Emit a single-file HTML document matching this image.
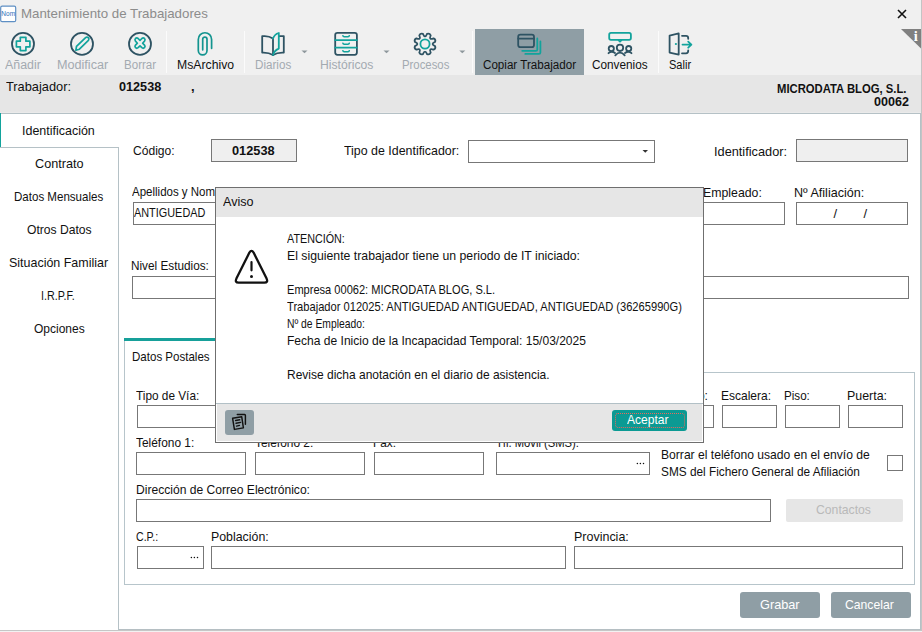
<!DOCTYPE html>
<html><head><meta charset="utf-8">
<style>
html,body{margin:0;padding:0;width:922px;height:632px;overflow:hidden;background:#f0f0f0}
body{position:relative;font-family:"Liberation Sans", sans-serif}
.r,.bx,.tx{position:absolute;box-sizing:border-box}
.tx{white-space:pre;transform-origin:0 0;}
</style></head><body>
<div class='r' style='left:0px;top:0px;width:922px;height:632px;background:#f0f0f0;'></div>
<div class='r' style='left:0px;top:75px;width:921px;height:38px;background:#e6e6e6;'></div>
<div class='r' style='left:0px;top:112px;width:921px;height:1px;background:#eaeaea;'></div>
<div class='r' style='left:0px;top:113px;width:921px;height:1px;background:#b5c1c6;'></div>
<div class='r' style='left:0px;top:114px;width:920px;height:516px;background:#ffffff;'></div>
<div class='r' style='left:921px;top:0px;width:1px;height:632px;background:#c4c4c4;'></div>
<div class='r' style='left:920px;top:113px;width:1px;height:517px;background:#b5c1c6;'></div>
<div class='r' style='left:118px;top:629px;width:803px;height:1px;background:#b5bfc3;'></div>
<div class='r' style='left:0px;top:630px;width:922px;height:1px;background:#c6c6c6;'></div>
<div class='r' style='left:0px;top:631px;width:922px;height:1px;background:#f2f2f2;'></div>
<div class='r' style='left:0px;top:113px;width:1px;height:34px;background:#12a39c;'></div>
<div class='r' style='left:0px;top:147px;width:119px;height:1px;background:#b5c1c6;'></div>
<div class='r' style='left:118px;top:147px;width:1px;height:483px;background:#b5c1c6;'></div>
<div class='r' style='left:166px;top:31px;width:1px;height:42px;background:#fbfbfb;'></div>
<div class='r' style='left:244px;top:31px;width:1px;height:42px;background:#fbfbfb;'></div>
<div class='r' style='left:472px;top:31px;width:1px;height:42px;background:#fbfbfb;'></div>
<div class='r' style='left:658px;top:31px;width:1px;height:42px;background:#fbfbfb;'></div>
<div class='r' style='left:475px;top:29px;width:109px;height:46px;background:#8f9ea5;'></div>
<div class='bx' style='left:211px;top:139px;width:86px;height:23px;background:#efefef;border:1px solid #777777;'></div>
<div class='bx' style='left:468px;top:140px;width:187px;height:23px;background:#fff;border:1px solid #777777;'></div>
<div class='bx' style='left:796px;top:139px;width:112px;height:23px;background:#efefef;border:1px solid #777777;'></div>
<div class='bx' style='left:133px;top:202px;width:468px;height:23px;background:#fff;border:1px solid #777777;'></div>
<div class='bx' style='left:620px;top:202px;width:165px;height:23px;background:#fff;border:1px solid #777777;'></div>
<div class='bx' style='left:796px;top:202px;width:112px;height:23px;background:#fff;border:1px solid #777777;'></div>
<div class='bx' style='left:132px;top:276px;width:777px;height:23px;background:#fff;border:1px solid #777777;'></div>
<svg class='r' style='left:640px;top:148px' width='10' height='6'><path d='M2.5,2 L8,2 L5.25,4.8Z' fill='#333'/></svg>
<div class='r' style='left:124px;top:338px;width:92px;height:3px;background:#17a09a;'></div>
<div class='r' style='left:124px;top:341px;width:1px;height:244px;background:#b7c5cb;'></div>
<div class='r' style='left:124px;top:584px;width:791px;height:1px;background:#b7c5cb;'></div>
<div class='r' style='left:914px;top:372px;width:1px;height:213px;background:#b7c5cb;'></div>
<div class='r' style='left:216px;top:372px;width:699px;height:1px;background:#b7c5cb;'></div>
<div class='bx' style='left:137px;top:405px;width:504px;height:23px;background:#fff;border:1px solid #777777;'></div>
<div class='bx' style='left:650px;top:405px;width:64px;height:23px;background:#fff;border:1px solid #777777;'></div>
<div class='bx' style='left:722px;top:405px;width:55px;height:23px;background:#fff;border:1px solid #777777;'></div>
<div class='bx' style='left:785px;top:405px;width:55px;height:23px;background:#fff;border:1px solid #777777;'></div>
<div class='bx' style='left:848px;top:405px;width:55px;height:23px;background:#fff;border:1px solid #777777;'></div>
<div class='bx' style='left:136px;top:452px;width:110px;height:23px;background:#fff;border:1px solid #777777;'></div>
<div class='bx' style='left:255px;top:452px;width:110px;height:23px;background:#fff;border:1px solid #777777;'></div>
<div class='bx' style='left:374px;top:452px;width:110px;height:23px;background:#fff;border:1px solid #777777;'></div>
<div class='bx' style='left:496px;top:452px;width:154px;height:23px;background:#fff;border:1px solid #777777;'></div>
<div class='bx' style='left:887px;top:455px;width:16px;height:16px;background:#fff;border:1px solid #777777;'></div>
<div class='bx' style='left:136px;top:499px;width:635px;height:23px;background:#fff;border:1px solid #777777;'></div>
<div class='r' style='left:786px;top:499px;width:117px;height:23px;background:#e6e6e6;border-radius:2px'></div>
<div class='bx' style='left:137px;top:546px;width:67px;height:23px;background:#fff;border:1px solid #777777;'></div>
<div class='bx' style='left:211px;top:546px;width:355px;height:23px;background:#fff;border:1px solid #777777;'></div>
<div class='bx' style='left:574px;top:546px;width:329px;height:23px;background:#fff;border:1px solid #777777;'></div>
<svg class='r' style='left:0;top:0' width='922' height='632'><g fill='#111'><circle cx='637.4' cy='463.4' r='0.75'/><circle cx='640.4' cy='463.4' r='0.75'/><circle cx='643.5' cy='463.4' r='0.75'/><circle cx='191.4' cy='557.4' r='0.75'/><circle cx='194.4' cy='557.4' r='0.75'/><circle cx='197.5' cy='557.4' r='0.75'/></g></svg>
<div class='r' style='left:740px;top:592px;width:80px;height:26px;background:#8f9ea5;border-radius:3px'></div>
<div class='r' style='left:831px;top:592px;width:80px;height:26px;background:#8f9ea5;border-radius:3px'></div>
<svg class='r' style='left:0;top:5px' width='18' height='18'>
<rect x='0.7' y='1.2' width='15' height='15.5' rx='1.5' fill='#fff' stroke='#5e8fc4' stroke-width='1.2'/>
<text x='8.2' y='11.2' font-family='Liberation Sans' font-size='6.5' fill='#2f6fb8' text-anchor='middle' transform='scale(1,1)'>Nom</text></svg>
<svg class='r' style='left:894px;top:6px' width='16' height='16'><path d='M4,4 L12,12 M12,4 L4,12' stroke='#111' stroke-width='1.6'/></svg>
<svg class='r' style='left:900px;top:28px' width='22' height='22'><path d='M1,1 L21,1 L21,20.5Z' fill='#808080'/><text x='15.8' y='13.2' font-family='Liberation Serif' font-weight='bold' font-size='14.5' fill='#fff' text-anchor='middle'>i</text></svg>
<svg class='r' style='left:0;top:0' width='922' height='80' fill='none' stroke-linecap='round' stroke-linejoin='round'>
<g stroke='#2e5363' stroke-width='1.8'>
<circle cx='23' cy='43.9' r='11'/>
<circle cx='82' cy='43.9' r='11'/>
<circle cx='140' cy='43.9' r='11'/>
</g>
<g stroke='#12a39c' stroke-width='1.7'>
<path d='M20.3,37.3 H25.9 V41.2 H29.9 V46.8 H25.9 V50.6 H20.3 V46.8 H16.4 V41.2 H20.3 Z'/>
<path d='M76.5,46.4 L85.6,37.6 Q87,36.4 88.3,37.7 Q89.5,39 88.4,40.4 L79.4,49.2 L75.9,50.2 Z'/>
<path d='M135.5,38.5 Q136.8,37.4 138.1,38.5 L140,40.4 L141.9,38.5 Q143.2,37.4 144.5,38.5 Q145.6,39.8 144.5,41.1 L142.6,43.2 L144.5,45.1 Q145.6,46.4 144.5,47.7 Q143.2,48.8 141.9,47.7 L140,45.9 L138.1,47.7 Q136.8,48.8 135.5,47.7 Q134.4,46.4 135.5,45.1 L137.4,43.2 L135.5,41.1 Q134.4,39.8 135.5,38.5Z'/>
<path d='M211.6,48.3 V39.4 A6.65,6.65 0 0 0 198.3,39.4 V50.6 A4.35,4.35 0 0 0 207,50.6 V39.2 A2.15,2.15 0 0 0 202.7,39.2 V49.8' stroke='#13948f'/>
</g>
<g stroke='#2e5363' stroke-width='1.8'>
<path d='M273,38.5 C270.5,36.8 266,35.7 262.2,36.2 V52.6 C266,52.4 270.5,53.4 273,55 Z'/>
<path d='M279.5,36.2 C281,36 282.8,36 283.8,36.2 V52.6 C280,52.4 275.5,53.4 273,55'/>
<rect x='335.2' y='32.9' width='21.7' height='21.9' rx='2.2'/>
<path d='M425.00,36.40 Q425.99,36.47 427.05,33.91 Q429.59,32.91 430.68,35.41 Q429.63,37.97 430.37,38.63 Q431.03,39.37 433.59,38.32 Q436.09,39.41 435.09,41.95 Q432.53,43.01 432.60,44.00 Q432.53,44.99 435.09,46.05 Q436.09,48.59 433.59,49.68 Q431.03,48.63 430.37,49.37 Q429.63,50.03 430.68,52.59 Q429.59,55.09 427.05,54.09 Q425.99,51.53 425.00,51.60 Q424.01,51.53 422.95,54.09 Q420.41,55.09 419.32,52.59 Q420.37,50.03 419.63,49.37 Q418.97,48.63 416.41,49.68 Q413.91,48.59 414.91,46.05 Q417.47,44.99 417.40,44.00 Q417.47,43.01 414.91,41.95 Q413.91,39.41 416.41,38.32 Q418.97,39.37 419.63,38.63 Q420.37,37.97 419.32,35.41 Q420.41,32.91 422.95,33.91 Q424.01,36.47 425.00,36.40Z'/>
<rect x='518.2' y='34.6' width='15.8' height='12.6' rx='2.2'/>
<path d='M518.2,38.7 H534'/>
<circle cx='611.3' cy='48.6' r='2.6'/>
<circle cx='620' cy='47.8' r='3.2'/>
<circle cx='628.7' cy='48.6' r='2.6'/>
<path d='M608.5,53.2 Q611.5,50.4 615,53 M615.3,55.3 Q620,49.8 624.7,55.3 M625,53 Q628.5,50.4 631.5,53.2'/>
<path d='M669.6,35.7 L678.7,33.4 V54.6 L669.6,52.6 Z'/>
<path d='M682,35.8 H686 Q688.2,35.8 688.2,38 V38.8 M682,53.3 H686 Q688.2,53.3 688.2,51.1 V50.3'/>
</g>
<g stroke='#12a39c' stroke-width='1.8'>
<path d='M273,38.5 C274,35.5 276.5,33.6 278.8,33 V48.6 C276.2,49.6 274,52 273,55'/>
<path d='M335.2,40.2 H356.9 M335.2,47.7 H356.9'/>
<path stroke-width='1.6' d='M342.9,35.7 Q343.1,36.7 344.2,36.7 H348 Q349.1,36.7 349.3,35.7 M342.9,43.2 Q343.1,44.2 344.2,44.2 H348 Q349.1,44.2 349.3,43.2 M342.9,50.7 Q343.1,51.7 344.2,51.7 H348 Q349.1,51.7 349.3,50.7'/>
<path d='M537.3,38.4 V49.4 Q537.3,50.8 535.9,50.8 H522.2 M540.4,41.4 V52.4 Q540.4,53.9 539,53.9 H525.3'/>
<rect x='609.2' y='32.9' width='21.7' height='7' rx='1.8'/>
<path d='M682.5,44.6 H691 M688.2,41.6 L691.4,44.6 L688.2,47.7'/>
</g>
<circle cx='425' cy='44' r='4.6' stroke='#12a39c' stroke-width='1.8'/>
<path d='M618.6,40.4 L620,41.8 L621.4,40.4' stroke='#12a39c' stroke-width='1.6'/>
<circle cx='675.9' cy='44' r='1.1' fill='#12a39c' stroke='none'/>
<g fill='#8e979c' stroke='none'>
<path d='M301.5,50.5 H307.5 L304.5,53.3Z'/>
<path d='M383.5,50.5 H389.5 L386.5,53.3Z'/>
<path d='M459.3,50.5 H465.3 L462.3,53.3Z'/>
</g>
</svg>
<div class='tx' style='left:20.57px;top:6.80px;font-size:13px;line-height:13px;font-weight:400;color:#8c8c8c;transform:scaleX(1.0220)'>Mantenimiento de Trabajadores</div>
<div class='tx' style='left:5.33px;top:59.40px;font-size:12px;line-height:12px;font-weight:400;color:#a3aab0;transform:scaleX(1.0318)'>Añadir</div>
<div class='tx' style='left:56.72px;top:59.40px;font-size:12px;line-height:12px;font-weight:400;color:#a3aab0;transform:scaleX(1.0518)'>Modificar</div>
<div class='tx' style='left:123.89px;top:59.40px;font-size:12px;line-height:12px;font-weight:400;color:#a3aab0;transform:scaleX(0.9634)'>Borrar</div>
<div class='tx' style='left:176.74px;top:59.40px;font-size:12px;line-height:12px;font-weight:400;color:#111;transform:scaleX(1.0190)'>MsArchivo</div>
<div class='tx' style='left:254.79px;top:59.40px;font-size:12px;line-height:12px;font-weight:400;color:#a3aab0;transform:scaleX(0.9702)'>Diarios</div>
<div class='tx' style='left:319.65px;top:59.40px;font-size:12px;line-height:12px;font-weight:400;color:#a3aab0;transform:scaleX(1.0130)'>Históricos</div>
<div class='tx' style='left:401.81px;top:59.40px;font-size:12px;line-height:12px;font-weight:400;color:#a3aab0;transform:scaleX(0.9456)'>Procesos</div>
<div class='tx' style='left:482.89px;top:59.40px;font-size:12px;line-height:12px;font-weight:400;color:#111;transform:scaleX(0.9684)'>Copiar Trabajador</div>
<div class='tx' style='left:592.08px;top:59.40px;font-size:12px;line-height:12px;font-weight:400;color:#111;transform:scaleX(0.9813)'>Convenios</div>
<div class='tx' style='left:668.83px;top:59.40px;font-size:12px;line-height:12px;font-weight:400;color:#111;transform:scaleX(0.9195)'>Salir</div>
<div class='tx' style='left:5.60px;top:80.00px;font-size:13px;line-height:13px;font-weight:400;color:#111;transform:scaleX(0.9852)'>Trabajador:</div>
<div class='tx' style='left:119.31px;top:81.00px;font-size:12px;line-height:12px;font-weight:700;color:#111;transform:scaleX(1.0541)'>012538</div>
<div class='tx' style='left:191.09px;top:80.00px;font-size:13px;line-height:13px;font-weight:700;color:#111;transform:scaleX(1.0000)'>,</div>
<div class='tx' style='left:776.81px;top:81.80px;font-size:13px;line-height:13px;font-weight:700;color:#111;transform:scaleX(0.8677)'>MICRODATA BLOG, S.L.</div>
<div class='tx' style='left:873.72px;top:96.00px;font-size:12px;line-height:12px;font-weight:700;color:#111;transform:scaleX(1.0458)'>00062</div>
<div class='tx' style='left:21.73px;top:124.00px;font-size:13px;line-height:13px;font-weight:400;color:#111;transform:scaleX(0.9592)'>Identificación</div>
<div class='tx' style='left:35.11px;top:156.70px;font-size:13px;line-height:13px;font-weight:400;color:#111;transform:scaleX(0.9727)'>Contrato</div>
<div class='tx' style='left:13.69px;top:189.50px;font-size:13px;line-height:13px;font-weight:400;color:#111;transform:scaleX(0.8882)'>Datos Mensuales</div>
<div class='tx' style='left:26.55px;top:222.70px;font-size:13px;line-height:13px;font-weight:400;color:#111;transform:scaleX(0.9324)'>Otros Datos</div>
<div class='tx' style='left:9.23px;top:256.00px;font-size:13px;line-height:13px;font-weight:400;color:#111;transform:scaleX(0.9591)'>Situación Familiar</div>
<div class='tx' style='left:41.45px;top:289.00px;font-size:13px;line-height:13px;font-weight:400;color:#111;transform:scaleX(0.8243)'>I.R.P.F.</div>
<div class='tx' style='left:33.76px;top:321.80px;font-size:13px;line-height:13px;font-weight:400;color:#111;transform:scaleX(0.9224)'>Opciones</div>
<div class='tx' style='left:132.55px;top:143.90px;font-size:13px;line-height:13px;font-weight:400;color:#111;transform:scaleX(0.9298)'>Código:</div>
<div class='tx' style='left:231.91px;top:144.90px;font-size:12px;line-height:12px;font-weight:700;color:#111;transform:scaleX(1.0643)'>012538</div>
<div class='tx' style='left:343.83px;top:143.50px;font-size:13px;line-height:13px;font-weight:400;color:#111;transform:scaleX(0.9533)'>Tipo de Identificador:</div>
<div class='tx' style='left:713.51px;top:145.40px;font-size:13px;line-height:13px;font-weight:400;color:#111;transform:scaleX(0.9810)'>Identificador:</div>
<div class='tx' style='left:131.59px;top:185.20px;font-size:13px;line-height:13px;font-weight:400;color:#111;transform:scaleX(0.8847)'>Apellidos y Nombre:</div>
<div class='tx' style='left:134.44px;top:205.80px;font-size:13px;line-height:13px;font-weight:400;color:#111;transform:scaleX(0.8373)'>ANTIGUEDAD</div>
<div class='tx' style='left:703.44px;top:185.70px;font-size:13px;line-height:13px;font-weight:400;color:#111;transform:scaleX(0.9474)'>Empleado:</div>
<div class='tx' style='left:793.52px;top:185.70px;font-size:13px;line-height:13px;font-weight:400;color:#111;transform:scaleX(0.9661)'>Nº Afiliación:</div>
<div class='tx' style='left:833.59px;top:207.00px;font-size:13px;line-height:13px;font-weight:400;color:#111;transform:scaleX(1.0000)'>/</div>
<div class='tx' style='left:863.59px;top:207.00px;font-size:13px;line-height:13px;font-weight:400;color:#111;transform:scaleX(1.0000)'>/</div>
<div class='tx' style='left:131.48px;top:259.00px;font-size:13px;line-height:13px;font-weight:400;color:#111;transform:scaleX(0.9053)'>Nivel Estudios:</div>
<div class='tx' style='left:132.09px;top:349.70px;font-size:13px;line-height:13px;font-weight:400;color:#111;transform:scaleX(0.8878)'>Datos Postales</div>
<div class='tx' style='left:136.07px;top:389.00px;font-size:13px;line-height:13px;font-weight:400;color:#111;transform:scaleX(0.9084)'>Tipo de Vía:</div>
<div class='tx' style='left:661.66px;top:389.00px;font-size:13px;line-height:13px;font-weight:400;color:#111;transform:scaleX(0.9218)'>Número:</div>
<div class='tx' style='left:721.36px;top:388.70px;font-size:13px;line-height:13px;font-weight:400;color:#111;transform:scaleX(0.9236)'>Escalera:</div>
<div class='tx' style='left:784.29px;top:388.70px;font-size:13px;line-height:13px;font-weight:400;color:#111;transform:scaleX(0.8936)'>Piso:</div>
<div class='tx' style='left:847.13px;top:388.70px;font-size:13px;line-height:13px;font-weight:400;color:#111;transform:scaleX(0.9540)'>Puerta:</div>
<div class='tx' style='left:135.87px;top:435.90px;font-size:13px;line-height:13px;font-weight:400;color:#111;transform:scaleX(0.9158)'>Teléfono 1:</div>
<div class='tx' style='left:255.17px;top:435.90px;font-size:13px;line-height:13px;font-weight:400;color:#111;transform:scaleX(0.9158)'>Teléfono 2:</div>
<div class='tx' style='left:373.17px;top:435.90px;font-size:13px;line-height:13px;font-weight:400;color:#111;transform:scaleX(0.9070)'>Fax:</div>
<div class='tx' style='left:496.21px;top:435.90px;font-size:13px;line-height:13px;font-weight:400;color:#111;transform:scaleX(0.8630)'>Tfl. Movil (SMS):</div>
<div class='tx' style='left:660.55px;top:447.90px;font-size:13px;line-height:13px;font-weight:400;color:#111;transform:scaleX(0.9318)'>Borrar el teléfono usado en el envío de</div>
<div class='tx' style='left:660.57px;top:464.50px;font-size:13px;line-height:13px;font-weight:400;color:#111;transform:scaleX(0.9086)'>SMS del Fichero General de Afiliación</div>
<div class='tx' style='left:135.85px;top:482.70px;font-size:13px;line-height:13px;font-weight:400;color:#111;transform:scaleX(0.9296)'>Dirección de Correo Electrónico:</div>
<div class='tx' style='left:816.45px;top:502.60px;font-size:13px;line-height:13px;font-weight:400;color:#b9b9b9;transform:scaleX(0.9390)'>Contactos</div>
<div class='tx' style='left:135.96px;top:529.70px;font-size:13px;line-height:13px;font-weight:400;color:#111;transform:scaleX(0.8136)'>C.P.:</div>
<div class='tx' style='left:210.64px;top:529.70px;font-size:13px;line-height:13px;font-weight:400;color:#111;transform:scaleX(0.9501)'>Población:</div>
<div class='tx' style='left:573.53px;top:529.70px;font-size:13px;line-height:13px;font-weight:400;color:#111;transform:scaleX(0.9601)'>Provincia:</div>
<div class='tx' style='left:760.01px;top:597.60px;font-size:13px;line-height:13px;font-weight:400;color:#fff;transform:scaleX(0.9790)'>Grabar</div>
<div class='tx' style='left:845.05px;top:597.60px;font-size:13px;line-height:13px;font-weight:400;color:#fff;transform:scaleX(0.9374)'>Cancelar</div>
<div class='r' style='left:215px;top:187px;width:489px;height:256px;background:#6f6f6f;'></div>
<div class='r' style='left:216px;top:188px;width:487px;height:254px;background:#ffffff;'></div>
<div class='r' style='left:216px;top:188px;width:487px;height:29px;background:#e6e6e6;'></div>
<div class='r' style='left:216px;top:403px;width:487px;height:1px;background:#b2c0c6;'></div>
<div class='r' style='left:217px;top:404px;width:485px;height:37px;background:#e6e6e6;'></div>
<div class='r' style='left:225px;top:410px;width:29px;height:25px;background:#8f9ea5;border-radius:3px'></div>
<div class='r' style='left:612px;top:410px;width:75px;height:21px;background:#0b9a93;border-radius:3px'></div>
<div class='r' style='left:615px;top:413px;width:70px;height:15px;border:1px dotted #e86a5e;border-radius:3px'></div>
<svg class='r' style='left:0;top:0' width='922' height='632' fill='none' stroke-linecap='round' stroke-linejoin='round'>
<path d='M249.4,252.6 Q251.5,249.2 253.6,252.6 L266.6,278.6 Q268.4,282.6 264.4,282.6 H238.6 Q234.6,282.6 236.4,278.6 Z' stroke='#111' stroke-width='2.3'/>
<path d='M251.5,262 V270.3' stroke='#111' stroke-width='2.2'/>
<circle cx='251.5' cy='276.6' r='1.5' fill='#111' stroke='none'/>
<g stroke='#111' stroke-width='1.45'>
<path d='M232.6,418.3 L241.7,416.7 L243.4,427.9 L234.4,429.4 Z'/>
<path d='M237.3,414.5 H244.6 Q245.4,414.5 245.4,415.4 V424.3'/>
<path d='M235.6,420.5 L239.7,419.8 M236.1,423.3 L240.6,422.4 M236.6,426.1 L239.4,425.4'/>
</g>
</svg>
<div class='tx' style='left:222.52px;top:194.70px;font-size:13px;line-height:13px;font-weight:400;color:#111;transform:scaleX(0.9665)'>Aviso</div>
<div class='tx' style='left:286.75px;top:232.00px;font-size:13px;line-height:13px;font-weight:400;color:#111;transform:scaleX(0.8286)'>ATENCIÓN:</div>
<div class='tx' style='left:286.64px;top:249.00px;font-size:13px;line-height:13px;font-weight:400;color:#111;transform:scaleX(0.9435)'>El siguiente trabajador tiene un periodo de IT iniciado:</div>
<div class='tx' style='left:286.73px;top:283.00px;font-size:13px;line-height:13px;font-weight:400;color:#111;transform:scaleX(0.8512)'>Empresa 00062: MICRODATA BLOG, S.L.</div>
<div class='tx' style='left:286.72px;top:299.80px;font-size:13px;line-height:13px;font-weight:400;color:#111;transform:scaleX(0.8562)'>Trabajador 012025: ANTIGUEDAD ANTIGUEDAD, ANTIGUEDAD (36265990G)</div>
<div class='tx' style='left:286.78px;top:316.80px;font-size:13px;line-height:13px;font-weight:400;color:#111;transform:scaleX(0.7943)'>Nº de Empleado:</div>
<div class='tx' style='left:286.66px;top:334.00px;font-size:13px;line-height:13px;font-weight:400;color:#111;transform:scaleX(0.9261)'>Fecha de Inicio de la Incapacidad Temporal: 15/03/2025</div>
<div class='tx' style='left:286.66px;top:367.80px;font-size:13px;line-height:13px;font-weight:400;color:#111;transform:scaleX(0.9221)'>Revise dicha anotación en el diario de asistencia.</div>
<div class='tx' style='left:627.16px;top:412.60px;font-size:13px;line-height:13px;font-weight:400;color:#fff;transform:scaleX(0.9275)'>Aceptar</div>
</body></html>
